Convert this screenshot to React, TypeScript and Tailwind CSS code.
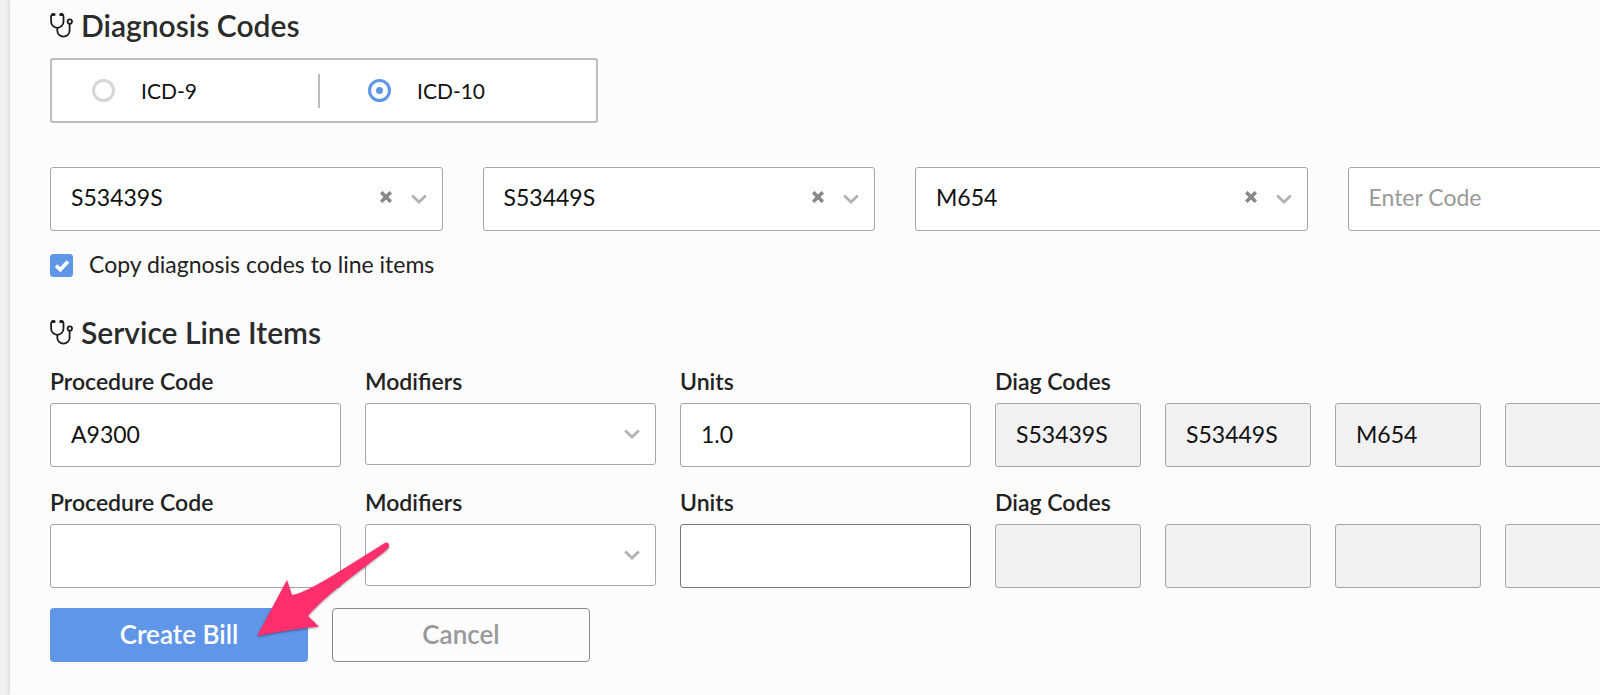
import { useState } from "react";
import clsx from "clsx";

const DIAGNOSIS_CODES = ["S53439S", "S53449S", "M654", ""];

const LINE_ITEMS = [
  { procedure: "A9300", units: "1.0", codes: DIAGNOSIS_CODES },
  { procedure: "", units: "", codes: ["", "", "", ""] },
];

const FIELD =
  "block w-full appearance-none rounded-[3px] border border-[#a6a6a6] px-5 text-[23px] leading-7 outline-none";
const LABEL = "mb-2 block text-[23px] leading-7 font-semibold text-[#222]";

function Stethoscope() {
  return (
    <svg
      viewBox="0 0 24 26"
      className="h-[26px] w-6 shrink-0"
      fill="none"
      stroke="#1c1c1c"
      strokeWidth="1.8"
      strokeLinecap="round"
      aria-hidden="true"
    >
      <path d="M3.6 2.4C2 2.2 1.1 3 1.1 4.6V9.4C1.1 13 3.8 15.8 7.3 15.8S13.5 13 13.5 9.4V4.6C13.5 3 12.6 2.2 11 2.4" />
      <path d="M7.3 15.8V18.4C7.3 22 10 24.6 13.4 24.6S19.6 22 19.6 18.4V12" />
      <circle cx="19.8" cy="9.6" r="2.2" />
      <path d="M2.8 2.5H4M10.8 2.5H12" strokeWidth="3.2" />
    </svg>
  );
}

function Chevron() {
  return (
    <svg
      viewBox="0 0 16 10"
      className="pointer-events-none h-[10px] w-4"
      fill="none"
      stroke="#b3b3b3"
      strokeWidth="2.8"
      aria-hidden="true"
    >
      <path d="M1.2 1.4L8 8L14.8 1.4" />
    </svg>
  );
}

function SectionTitle({ children }: { children: string }) {
  return (
    <h2 className="flex items-center gap-[7px] text-[30px] leading-9 font-semibold text-[#2b2b2b]">
      <Stethoscope />
      {children}
    </h2>
  );
}

function CodeSelect({ code, index }: { code: string; index: number }) {
  const [value, setValue] = useState(code);

  return (
    <div className="relative">
      <select
        aria-label={`Diagnosis code ${index + 1}`}
        value={value}
        onChange={(e) => setValue(e.target.value)}
        className={clsx(FIELD, "h-16 bg-white pb-1", value ? "text-[#111]" : "text-[#999]")}
      >
        <option value="">Enter Code</option>
        {code && <option value={code}>{code}</option>}
      </select>
      <div className="pointer-events-none absolute inset-y-0 right-4 flex items-center gap-[19px]">
        {value && (
          <button
            type="button"
            aria-label="Clear"
            onClick={() => setValue("")}
            className="pointer-events-auto"
          >
            <svg viewBox="0 0 12 12" className="mb-1 size-3" stroke="#888" strokeWidth="3.6">
              <path d="M1.2 1.2L10.8 10.8M10.8 1.2L1.2 10.8" />
            </svg>
          </button>
        )}
        <Chevron />
      </div>
    </div>
  );
}

function VersionOption({ label, checked, onChange }: {
  label: string;
  checked: boolean;
  onChange: () => void;
}) {
  return (
    <label className="flex items-center gap-[26px] text-[21px] leading-7 text-[#111]">
      <input
        type="radio"
        name="icd"
        checked={checked}
        onChange={onChange}
        className="grid size-[23px] appearance-none place-items-center rounded-full border-3 border-[#d6d6d6] bg-white before:size-[7px] before:rounded-full checked:border-[#5f96e8] checked:before:bg-[#5f96e8]"
      />
      {label}
    </label>
  );
}

function LineItem({ item, row }: { item: (typeof LINE_ITEMS)[number]; row: number }) {
  return (
    <div className="grid grid-cols-[291fr_291fr_291fr_745fr] gap-6">
      <div>
        <label htmlFor={`procedure-${row}`} className={LABEL}>Procedure Code</label>
        <input
          id={`procedure-${row}`}
          defaultValue={item.procedure}
          className={clsx(FIELD, "h-16 bg-white pb-[2px] text-[#111]")}
        />
      </div>
      <div>
        <label htmlFor={`modifiers-${row}`} className={LABEL}>Modifiers</label>
        <div className="relative">
          <select
            id={`modifiers-${row}`}
            className={clsx(FIELD, "h-[62px] bg-white text-[#111]")}
          >
            <option value="" />
          </select>
          <div className="pointer-events-none absolute inset-y-0 right-4 flex items-center">
            <Chevron />
          </div>
        </div>
      </div>
      <div>
        <label htmlFor={`units-${row}`} className={LABEL}>Units</label>
        <input
          id={`units-${row}`}
          defaultValue={item.units}
          className={clsx(FIELD, "h-16 bg-white pb-[2px] text-[#111]", !item.units && "border-[#777]!")}
        />
      </div>
      <div>
        <label htmlFor={`diag-${row}-0`} className={LABEL}>Diag Codes</label>
        <div className="grid grid-cols-[146fr_146fr_146fr_146fr_65fr] gap-6">
          {item.codes.map((code, i) => (
            <input
              key={i}
              id={`diag-${row}-${i}`}
              aria-label={i ? `Diag code ${i + 1}` : undefined}
              value={code}
              readOnly
              className={clsx(FIELD, "h-16 min-w-0 bg-[#f1f1f1] pb-[2px] text-[#111]")}
            />
          ))}
        </div>
      </div>
    </div>
  );
}

function Arrow() {
  return (
    <svg
      viewBox="0 0 150 110"
      className="pointer-events-none absolute -top-[73px] left-[200px] h-[110px] w-[150px] drop-shadow-[0_1px_1px_rgba(0,0,0,0.4)]"
      aria-hidden="true"
    >
      <path
        d="M7 101L37 45L42 60Q52 59 82 41L134 8.500Q137 6.500 138.700 9Q140 12 137 14.500C112 35 76 59 58 81L69 91.500Q42 94 7 101Z"
        fill="#ff2f6e"
      />
    </svg>
  );
}

export default function App() {
  const [version, setVersion] = useState("ICD-10");
  const [copyCodes, setCopyCodes] = useState(true);

  return (
    <div className="min-h-screen overflow-hidden bg-[#f1f1f1] pl-[10px] font-['Lato',sans-serif]">
      <main className="min-h-screen bg-[#fcfcfc] pt-[7px] pb-8 pl-10 shadow-[0_0_5px_rgba(0,0,0,0.18)]">
        {/* the form is wider than the panel and runs past its right edge */}
        <form className="-mr-[140px]" onSubmit={(e) => e.preventDefault()}>
          <SectionTitle>Diagnosis Codes</SectionTitle>

          <fieldset
            aria-label="ICD version"
            className="mt-[15px] flex h-[65px] w-[548px] items-center rounded-[3px] border-2 border-[#bdbdbd] bg-white"
          >
            <div className="w-[268px] border-r-2 border-[#bbb] py-[3px] pl-10">
              <VersionOption
                label="ICD-9"
                checked={version === "ICD-9"}
                onChange={() => setVersion("ICD-9")}
              />
            </div>
            <div className="pl-12">
              <VersionOption
                label="ICD-10"
                checked={version === "ICD-10"}
                onChange={() => setVersion("ICD-10")}
              />
            </div>
          </fieldset>

          <div className="mt-11 grid grid-cols-4 gap-10">
            {DIAGNOSIS_CODES.map((code, i) => (
              <CodeSelect key={i} code={code} index={i} />
            ))}
          </div>

          <label className="mt-[19px] flex items-center gap-4 text-[23px] leading-7 text-[#222]">
            <span className="relative mt-[2px] size-[23px]">
              <input
                type="checkbox"
                checked={copyCodes}
                onChange={(e) => setCopyCodes(e.target.checked)}
                className="block size-full appearance-none rounded-[3px] border border-[#5f96e8] bg-white checked:bg-[#5f96e8]"
              />
              <svg
                viewBox="0 0 23 23"
                className="pointer-events-none absolute inset-0 size-full"
                fill="none"
                stroke="#fff"
                strokeWidth="3.6"
                aria-hidden="true"
              >
                <path d="M6 11.600L10.300 15.600L18 7.500" />
              </svg>
            </span>
            Copy diagnosis codes to line items
          </label>

          <div className="mt-9">
            <SectionTitle>Service Line Items</SectionTitle>
          </div>
          <div className="mt-[17px] flex flex-col gap-[21px]">
            {LINE_ITEMS.map((item, i) => (
              <LineItem key={i} item={item} row={i} />
            ))}
          </div>

          <div className="relative mt-5 flex gap-6 text-[26px] leading-8 font-semibold">
            <button type="submit" className="h-[54px] w-[258px] rounded-[4px] bg-[#5f96e8] pb-[2px] text-white">
              Create Bill
            </button>
            <button
              type="button"
              className="h-[54px] w-[258px] rounded-[4px] border border-[#888] pb-[2px] text-[#999]"
            >
              Cancel
            </button>
            <Arrow />
          </div>
        </form>
      </main>
    </div>
  );
}
